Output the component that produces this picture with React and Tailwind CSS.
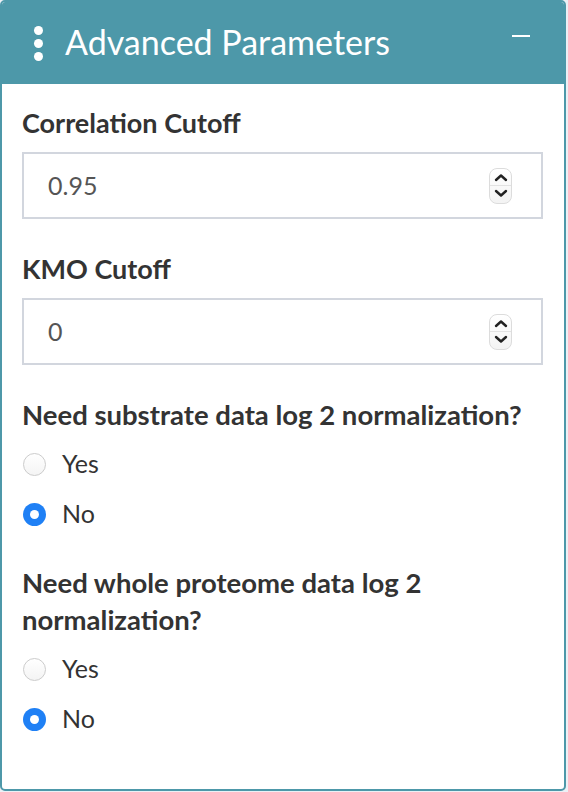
import React, { useState } from 'react';

const Spinner = () => (
  <div className="absolute right-[29px] top-1/2 -translate-y-1/2 w-[23px] h-[36px] rounded-[8px] border border-[#dcdcdc] bg-gradient-to-b from-white to-[#f3f3f3] flex flex-col items-center justify-center">
    <svg width="14" height="9" viewBox="0 0 14 9" className="mb-[3px]">
      <path d="M2 7 L7 2.5 L12 7" fill="none" stroke="#222" strokeWidth="2.4" strokeLinecap="round" strokeLinejoin="round" />
    </svg>
    <div className="w-full h-px bg-[#e2e2e2]" />
    <svg width="14" height="9" viewBox="0 0 14 9" className="mt-[3px]">
      <path d="M2 2 L7 6.5 L12 2" fill="none" stroke="#222" strokeWidth="2.4" strokeLinecap="round" strokeLinejoin="round" />
    </svg>
  </div>
);

const NumberField = ({ label, value, className }) => (
  <div className={className}>
    <label className="block text-[27px] font-bold text-[#333] leading-[30px] mb-[14px]">{label}</label>
    <div className="relative h-[67px] border-2 border-[#d2d6de] bg-white flex items-center pl-[24px]">
      <span className="text-[25px] text-[#555]">{value}</span>
      <Spinner />
    </div>
  </div>
);

const Radio = ({ checked, label, onClick }) => (
  <div className="flex items-center h-[50px] cursor-pointer" onClick={onClick}>
    {checked ? (
      <span className="w-[23px] h-[23px] rounded-full bg-[#1f80f5] flex items-center justify-center ml-[1px]">
        <span className="w-[9px] h-[9px] rounded-full bg-white" />
      </span>
    ) : (
      <span className="w-[23px] h-[23px] rounded-full border border-[#cccccc] bg-gradient-to-b from-white to-[#f4f4f4] ml-[1px]" />
    )}
    <span className="ml-[16px] text-[25px] text-[#333]">{label}</span>
  </div>
);

const RadioGroup = ({ label, value, onChange }) => (
  <div>
    <label className="block text-[27.5px] font-bold text-[#333] leading-[37px] mb-[6px]">{label}</label>
    <Radio checked={value === 'yes'} label="Yes" onClick={() => onChange('yes')} />
    <Radio checked={value === 'no'} label="No" onClick={() => onChange('no')} />
  </div>
);

export default function App() {
  const [substrate, setSubstrate] = useState('no');
  const [proteome, setProteome] = useState('no');

  return (
    <div className="w-[568px] h-[792px] bg-[#ecf0f5] font-['Lato','Liberation_Sans',sans-serif]">
      <div className="w-[566px] h-[791px] border-2 border-[#4d98a9] rounded-[5px] bg-white overflow-hidden flex flex-col">
        <div className="h-[82px] bg-[#4d98a9] flex items-center pl-[32px] pr-[34px] text-white shrink-0">
          <div className="flex flex-col gap-[4px] mr-[22px]">
            <span className="w-[9px] h-[9px] rounded-full bg-white" />
            <span className="w-[9px] h-[9px] rounded-full bg-white" />
            <span className="w-[9px] h-[9px] rounded-full bg-white" />
          </div>
          <h3 className="text-[34px] leading-none flex-1 -mt-[2px]">Advanced Parameters</h3>
          <span className="w-[18px] h-[2px] bg-white -mt-[14px]" />
        </div>
        <div className="pl-[20px] pr-[21px] pt-[24px]">
          <NumberField className="mb-[35px]" label="Correlation Cutoff" value="0.95" />
          <NumberField className="mb-[31px]" label="KMO Cutoff" value="0" />
          <div className="mb-[25px]">
            <RadioGroup label="Need substrate data log 2 normalization?" value={substrate} onChange={setSubstrate} />
          </div>
          <div className="pr-[60px]">
            <RadioGroup label="Need whole proteome data log 2 normalization?" value={proteome} onChange={setProteome} />
          </div>
        </div>
      </div>
    </div>
  );
}
